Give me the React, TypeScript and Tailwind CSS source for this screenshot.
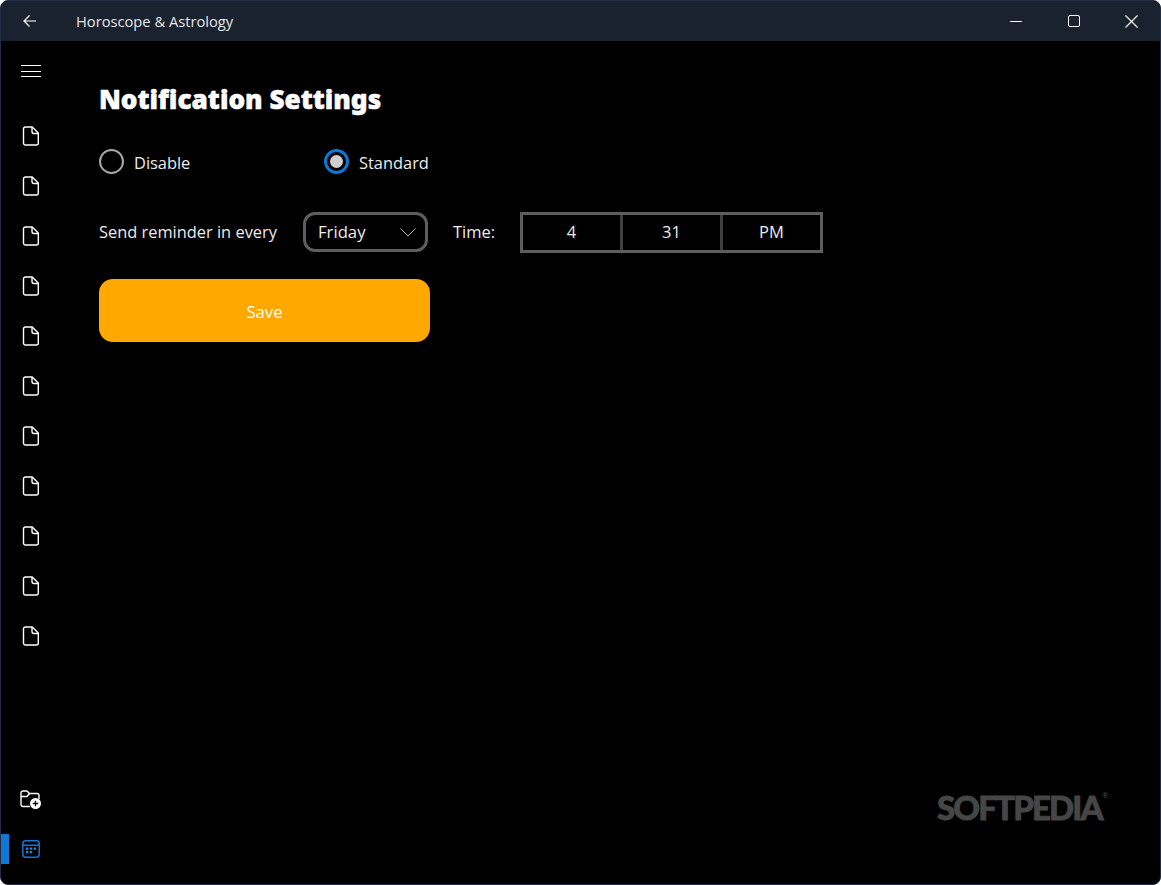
import React from 'react';

const font = { fontFamily: '"Open Sans", "Noto Sans", sans-serif' };

const FileIcon = () => (
  <svg width="18" height="20" viewBox="0 0 18 20" fill="none" stroke="white" strokeWidth="1.4" strokeLinejoin="round">
    <path d="M3.5 1H10.2L16.3 7.1V17A2 2 0 0 1 14.3 19H3.5A2 2 0 0 1 1.5 17V3A2 2 0 0 1 3.5 1Z" />
    <path d="M10 1.2V5.5A2 2 0 0 0 12 7.5H16" />
  </svg>
);

const FolderAddIcon = () => (
  <svg className="ml-[1px]" width="22" height="20" viewBox="0 0 22 20" fill="none" stroke="white" strokeWidth="1.4" strokeLinejoin="round">
    <path d="M10 16.5H3A2 2 0 0 1 1 14.5V3A2 2 0 0 1 3 1H7L9.5 3.5H17A2 2 0 0 1 19 5.5V9" />
    <path d="M1 6.5H7L9.5 3.5" />
    <circle cx="15.5" cy="13.5" r="5.5" fill="white" stroke="none" />
    <path d="M15.5 10.8V16.2M12.8 13.5H18.2" stroke="black" strokeWidth="1.3" />
  </svg>
);

const CalendarIcon = () => (
  <svg width="18" height="18" viewBox="0 0 18 18" fill="none">
    <rect x="0.8" y="0.8" width="16.4" height="16.4" rx="3" stroke="#0f78d4" strokeWidth="1.5" />
    <path d="M1 5.2H17" stroke="#0f78d4" strokeWidth="1.5" />
    <path d="M4 7.5H6.4V9.7H4ZM7.8 7.5H10.2V9.7H7.8ZM11.6 7.5H14V9.7H11.6ZM4 11H6.4V13.2H4ZM7.8 11H10.2V13.2H7.8Z" fill="#1a8ae8" />
  </svg>
);

const Radio = ({ label, checked }: { label: string; checked?: boolean }) => (
  <div className="flex items-center gap-[10px]">
    {checked ? (
      <span className="flex h-[25px] w-[25px] items-center justify-center rounded-full border-[3px] border-[#0f78d4]">
        <span className="h-[13px] w-[13px] rounded-full bg-[#d0d0d0]" />
      </span>
    ) : (
      <span className="h-[25px] w-[25px] rounded-full border-2 border-[#a8a8a8]" />
    )}
    <span className="pt-[2px] text-[16.4px] leading-[22px] text-[#ececec]">{label}</span>
  </div>
);

export default function App() {
  return (
    <div className="h-[885px] w-[1161px] overflow-hidden bg-white" style={font}>
      <div className="relative flex h-full flex-col overflow-hidden rounded-[8px] border border-[#1f2d47] bg-black text-white">
        {/* Title bar */}
        <div className="flex h-[40px] shrink-0 items-center bg-[#1a2230]">
          <svg className="ml-[22px]" width="14" height="14" viewBox="0 0 14 14" fill="none" stroke="white" strokeWidth="1.2">
            <path d="M13 7H1M6.5 1.5L1 7L6.5 12.5" />
          </svg>
          <span className="ml-[39px] text-[14.7px] text-[#e4e6e9]">Horoscope &amp; Astrology</span>
          <div className="ml-auto flex items-center">
            <span className="h-px w-[12px] bg-white" />
            <span className="ml-[46px] h-[12px] w-[12px] rounded-[2px] border border-white" />
            <svg className="ml-[45px] mr-[22px]" width="13" height="13" viewBox="0 0 13 13" stroke="white" strokeWidth="1.1">
              <path d="M0.5 0.5L12.5 12.5M12.5 0.5L0.5 12.5" />
            </svg>
          </div>
        </div>

        <div className="flex min-h-0 flex-1">
          {/* Sidebar */}
          <div className="flex w-[59px] shrink-0 flex-col items-center pt-[24px]">
            <div className="ml-[1px] flex h-[12px] w-[20px] flex-col justify-between">
              <span className="h-px bg-white" />
              <span className="h-px bg-white" />
              <span className="h-px bg-white" />
            </div>
            <div className="mt-[49px] flex flex-col gap-[30px]">
              {Array.from({ length: 11 }).map((_, i) => (
                <FileIcon key={i} />
              ))}
            </div>
            <div className="mt-auto flex w-full flex-col items-center pb-[26px]">
              <FolderAddIcon />
              <div className="relative mt-[30px] flex w-full justify-center">
                <span className="absolute left-0 top-[-6px] h-[30px] w-[8px] bg-[#0f78d4]" />
                <CalendarIcon />
              </div>
            </div>
          </div>

          {/* Content */}
          <div className="flex-1 pl-[39px] pt-[37px]">
            <h1 className="text-[26.2px] font-black leading-[42px] text-white [-webkit-text-stroke:0.5px_white]" style={{ fontFamily: '"Noto Sans", sans-serif' }}>Notification Settings</h1>
            <div className="mt-[29px] flex">
              <div className="w-[225px]">
                <Radio label="Disable" />
              </div>
              <Radio label="Standard" checked />
            </div>
            <div className="mt-[38px] flex items-center">
              <span className="w-[204px] text-[16.4px] text-[#ececec]">Send reminder in every</span>
              <div className="mb-[1px] flex h-[40px] w-[125px] items-center justify-between rounded-[12px] border-[3px] border-[#5e5e5e] pl-[12px] pr-[9px]">
                <span className="text-[16.7px] text-[#ececec]">Friday</span>
                <svg width="16" height="9" viewBox="0 0 16 9" fill="none" stroke="#c8c8c8" strokeWidth="0.9">
                  <path d="M0.5 0.5L8 8L15.5 0.5" />
                </svg>
              </div>
              <span className="ml-[25px] w-[67px] text-[16.5px] text-[#ececec]">Time:</span>
              <div className="flex h-[41px] w-[303px] border-[3px] border-[#5e5e5e] text-[16.5px] text-[#ececec]">
                <span className="flex flex-1 items-center justify-center border-r-[3px] border-[#404040]">4</span>
                <span className="flex flex-1 items-center justify-center border-r-[3px] border-[#404040]">31</span>
                <span className="flex flex-1 items-center justify-center">PM</span>
              </div>
            </div>
            <button className="mt-[26px] flex h-[63px] w-[331px] items-center justify-center rounded-[14px] bg-[#ffa800] pt-[3px] text-[16.7px] text-white">
              Save
            </button>
          </div>
        </div>

        {/* Watermark */}
        <div className="absolute left-[936px] top-[786px] flex items-start text-[#464646]">
          <span className="text-[33px] font-black leading-[40px] tracking-[-1.85px] [-webkit-text-stroke:0.8px_#464646]" style={{ fontFamily: 'Lato, sans-serif' }}>SOFTPEDIA</span>
          <span className="mt-[3px] text-[8px] leading-[10px]">®</span>
        </div>
      </div>
    </div>
  );
}
